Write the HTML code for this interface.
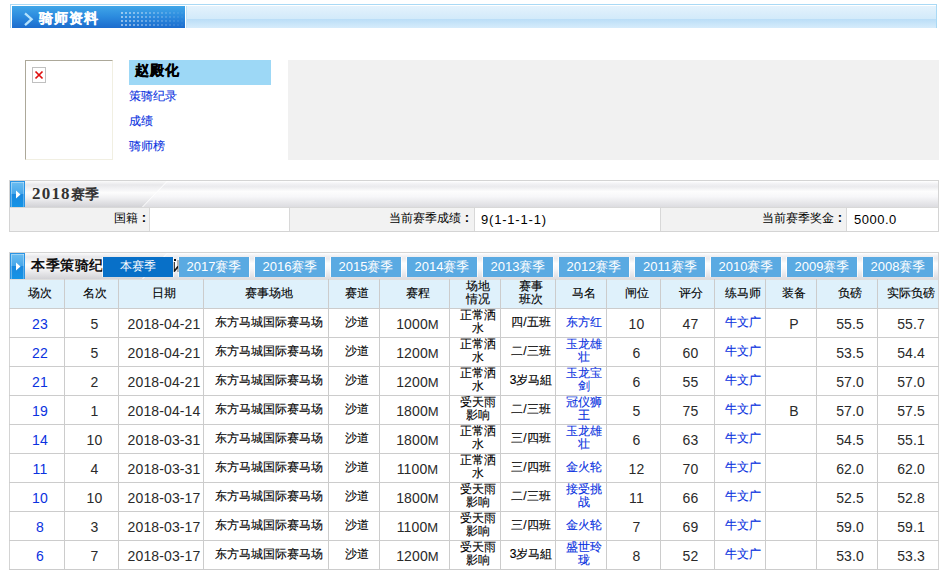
<!DOCTYPE html>
<html><head><meta charset="utf-8">
<style>
*{margin:0;padding:0;box-sizing:border-box}
html,body{width:948px;height:576px;overflow:hidden;background:#fff;font-family:"Liberation Sans",sans-serif;font-size:12px;color:#000}
.a{position:absolute}
.vl{position:absolute;width:1px;background:#cccccc}
.hl{position:absolute;height:1px;background:#cccccc}
.c{position:absolute;display:flex;align-items:center;justify-content:center;text-align:center;white-space:nowrap;line-height:13px;padding-left:6px}
.num{font-size:14px;letter-spacing:0.12px;padding-top:2px;color:#2a2a2a}
.cjk{font-size:12px;padding-bottom:2px;-webkit-text-stroke:0.12px currentColor}
.blue{color:#0a32e0}
.tab{position:absolute;top:257px;height:20px;width:70px;background:#5aaae2;color:#fff;font-size:13px;display:flex;align-items:center;justify-content:center;white-space:nowrap;padding-bottom:1px;box-shadow:-1px 0 0 rgba(255,255,255,0.7),1px 0 0 rgba(255,255,255,0.7)}
</style></head><body>

<div class="a" style="left:10px;top:4px;width:927px;height:24px;background:#a9d9f5"></div>
<div class="a" style="left:11px;top:5px;width:925px;height:23px;background:#ffffff"></div>
<div class="a" style="left:12px;top:6px;width:173px;height:22px;background:linear-gradient(#40a6e8,#2b8ade 50%,#1c6ccd)"></div>
<div class="a" style="left:186px;top:6px;width:1px;height:22px;background:#bfe3f8"></div>
<div class="a" style="left:187px;top:6px;width:749px;height:22px;background:linear-gradient(#e4f2fc,#d2eafa 58%,#b9ddf7 58%,#d6ecfb)"></div>
<svg class="a" style="left:22px;top:11px" width="14" height="16" viewBox="0 0 14 16"><path d="M3 2.3 L9.6 8.2 L3 14.2" fill="none" stroke="#b4e2fc" stroke-width="2.3"/></svg>
<div class="a" style="left:39px;top:10px;font-size:14px;font-weight:bold;color:#fff;line-height:17px;letter-spacing:1px;-webkit-text-stroke:0.15px #fff">骑师资料</div>
<svg class="a" style="left:121px;top:12px" width="64" height="16"><rect x="0" y="0" width="2" height="2" fill="#fff" fill-opacity="0.50"/><rect x="4" y="0" width="2" height="2" fill="#fff" fill-opacity="0.47"/><rect x="8" y="0" width="2" height="2" fill="#fff" fill-opacity="0.44"/><rect x="12" y="0" width="2" height="2" fill="#fff" fill-opacity="0.41"/><rect x="16" y="0" width="2" height="2" fill="#fff" fill-opacity="0.38"/><rect x="20" y="0" width="2" height="2" fill="#fff" fill-opacity="0.35"/><rect x="24" y="0" width="2" height="2" fill="#fff" fill-opacity="0.32"/><rect x="28" y="0" width="2" height="2" fill="#fff" fill-opacity="0.29"/><rect x="32" y="0" width="2" height="2" fill="#fff" fill-opacity="0.26"/><rect x="36" y="0" width="2" height="2" fill="#fff" fill-opacity="0.23"/><rect x="40" y="0" width="2" height="2" fill="#fff" fill-opacity="0.20"/><rect x="44" y="0" width="2" height="2" fill="#fff" fill-opacity="0.17"/><rect x="48" y="0" width="2" height="2" fill="#fff" fill-opacity="0.14"/><rect x="52" y="0" width="2" height="2" fill="#fff" fill-opacity="0.11"/><rect x="56" y="0" width="2" height="2" fill="#fff" fill-opacity="0.08"/><rect x="60" y="0" width="2" height="2" fill="#fff" fill-opacity="0.05"/><rect x="0" y="4" width="2" height="2" fill="#fff" fill-opacity="0.50"/><rect x="4" y="4" width="2" height="2" fill="#fff" fill-opacity="0.47"/><rect x="8" y="4" width="2" height="2" fill="#fff" fill-opacity="0.44"/><rect x="12" y="4" width="2" height="2" fill="#fff" fill-opacity="0.41"/><rect x="16" y="4" width="2" height="2" fill="#fff" fill-opacity="0.38"/><rect x="20" y="4" width="2" height="2" fill="#fff" fill-opacity="0.35"/><rect x="24" y="4" width="2" height="2" fill="#fff" fill-opacity="0.32"/><rect x="28" y="4" width="2" height="2" fill="#fff" fill-opacity="0.29"/><rect x="32" y="4" width="2" height="2" fill="#fff" fill-opacity="0.26"/><rect x="36" y="4" width="2" height="2" fill="#fff" fill-opacity="0.23"/><rect x="40" y="4" width="2" height="2" fill="#fff" fill-opacity="0.20"/><rect x="44" y="4" width="2" height="2" fill="#fff" fill-opacity="0.17"/><rect x="48" y="4" width="2" height="2" fill="#fff" fill-opacity="0.14"/><rect x="52" y="4" width="2" height="2" fill="#fff" fill-opacity="0.11"/><rect x="56" y="4" width="2" height="2" fill="#fff" fill-opacity="0.08"/><rect x="60" y="4" width="2" height="2" fill="#fff" fill-opacity="0.05"/><rect x="0" y="8" width="2" height="2" fill="#fff" fill-opacity="0.50"/><rect x="4" y="8" width="2" height="2" fill="#fff" fill-opacity="0.47"/><rect x="8" y="8" width="2" height="2" fill="#fff" fill-opacity="0.44"/><rect x="12" y="8" width="2" height="2" fill="#fff" fill-opacity="0.41"/><rect x="16" y="8" width="2" height="2" fill="#fff" fill-opacity="0.38"/><rect x="20" y="8" width="2" height="2" fill="#fff" fill-opacity="0.35"/><rect x="24" y="8" width="2" height="2" fill="#fff" fill-opacity="0.32"/><rect x="28" y="8" width="2" height="2" fill="#fff" fill-opacity="0.29"/><rect x="32" y="8" width="2" height="2" fill="#fff" fill-opacity="0.26"/><rect x="36" y="8" width="2" height="2" fill="#fff" fill-opacity="0.23"/><rect x="40" y="8" width="2" height="2" fill="#fff" fill-opacity="0.20"/><rect x="44" y="8" width="2" height="2" fill="#fff" fill-opacity="0.17"/><rect x="48" y="8" width="2" height="2" fill="#fff" fill-opacity="0.14"/><rect x="52" y="8" width="2" height="2" fill="#fff" fill-opacity="0.11"/><rect x="56" y="8" width="2" height="2" fill="#fff" fill-opacity="0.08"/><rect x="60" y="8" width="2" height="2" fill="#fff" fill-opacity="0.05"/><rect x="0" y="12" width="2" height="2" fill="#fff" fill-opacity="0.50"/><rect x="4" y="12" width="2" height="2" fill="#fff" fill-opacity="0.47"/><rect x="8" y="12" width="2" height="2" fill="#fff" fill-opacity="0.44"/><rect x="12" y="12" width="2" height="2" fill="#fff" fill-opacity="0.41"/><rect x="16" y="12" width="2" height="2" fill="#fff" fill-opacity="0.38"/><rect x="20" y="12" width="2" height="2" fill="#fff" fill-opacity="0.35"/><rect x="24" y="12" width="2" height="2" fill="#fff" fill-opacity="0.32"/><rect x="28" y="12" width="2" height="2" fill="#fff" fill-opacity="0.29"/><rect x="32" y="12" width="2" height="2" fill="#fff" fill-opacity="0.26"/><rect x="36" y="12" width="2" height="2" fill="#fff" fill-opacity="0.23"/><rect x="40" y="12" width="2" height="2" fill="#fff" fill-opacity="0.20"/><rect x="44" y="12" width="2" height="2" fill="#fff" fill-opacity="0.17"/><rect x="48" y="12" width="2" height="2" fill="#fff" fill-opacity="0.14"/><rect x="52" y="12" width="2" height="2" fill="#fff" fill-opacity="0.11"/><rect x="56" y="12" width="2" height="2" fill="#fff" fill-opacity="0.08"/><rect x="60" y="12" width="2" height="2" fill="#fff" fill-opacity="0.05"/></svg>
<div class="a" style="left:25px;top:60px;width:88px;height:100px;border:1px solid;border-color:#aca899 #f1efe2 #f1efe2 #aca899;background:#fff"></div>
<div class="a" style="left:32px;top:67px;width:14px;height:16px;border:1px solid #c0c0c0;background:#fff"></div>
<svg class="a" style="left:34px;top:70px" width="10" height="10" viewBox="0 0 10 10"><path d="M1.5 1.5 L8.5 8.5 M8.5 1.5 L1.5 8.5" stroke="#e01010" stroke-width="1.7"/></svg>
<div class="a" style="left:129px;top:60px;width:142px;height:25px;background:#9dd8f6"></div>
<div class="a" style="left:135px;top:62px;font-size:14px;font-weight:bold;line-height:17px;letter-spacing:1px;-webkit-text-stroke:0.4px #000">赵殿化</div>
<div class="a" style="left:129px;top:89px;font-size:12px;line-height:15px;color:#0a32e0;-webkit-text-stroke:0.1px #0a32e0">策骑纪录</div>
<div class="a" style="left:129px;top:114px;font-size:12px;line-height:15px;color:#0a32e0;-webkit-text-stroke:0.1px #0a32e0">成绩</div>
<div class="a" style="left:129px;top:139px;font-size:12px;line-height:15px;color:#0a32e0;-webkit-text-stroke:0.1px #0a32e0">骑师榜</div>
<div class="a" style="left:288px;top:60px;width:651px;height:100px;background:#f1f1f1"></div>
<div class="a" style="left:9px;top:180px;width:930px;height:52px;border:1px solid #d4d4d4;background:#fff"></div>
<svg class="a" style="left:10px;top:181px" width="928" height="26" viewBox="0 0 928 26"><defs><linearGradient id="gR" x1="0" y1="0" x2="0" y2="1"><stop offset="0" stop-color="#ffffff"/><stop offset="0.12" stop-color="#f0f0f3"/><stop offset="0.22" stop-color="#ebebee"/><stop offset="0.4" stop-color="#fdfdfd"/><stop offset="0.6" stop-color="#f7f7f9"/><stop offset="1" stop-color="#dcdce0"/></linearGradient><linearGradient id="gL" x1="0" y1="0" x2="0" y2="1"><stop offset="0" stop-color="#fbfbfb"/><stop offset="0.15" stop-color="#e8e8eb"/><stop offset="0.3" stop-color="#f2f2f4"/><stop offset="0.45" stop-color="#fdfdfd"/><stop offset="0.65" stop-color="#f0f0f2"/><stop offset="1" stop-color="#d2d2d6"/></linearGradient></defs><rect width="928" height="26" fill="url(#gR)"/><polygon points="0,0 157,0 132,26 0,26" fill="url(#gL)"/><line x1="157.5" y1="0" x2="132.5" y2="26" stroke="#ffffff" stroke-width="1" stroke-opacity="0.9"/></svg>
<div class="a" style="left:10px;top:181px;width:15px;height:26px;background:#2a94e4;"></div><div class="a" style="left:11px;top:182px;width:13px;height:25px;background:linear-gradient(#6cbdf0,#45a6ea 50%,#1a88de 50%,#1494e6);box-shadow:inset 1px 1px 0 rgba(255,255,255,0.35),inset -1px 0 0 rgba(255,255,255,0.3)"></div>
<svg class="a" style="left:16px;top:190px" width="6" height="9"><path d="M0 0.5 L4.5 4.5 L0 8.5Z" fill="#fff"/></svg>
<div class="a" style="left:32px;top:185px;font-size:14px;font-weight:bold;color:#333;line-height:18px"><span style="letter-spacing:1.2px;font-family:&quot;Liberation Serif&quot;,serif;font-size:17px">2018</span>赛季</div>
<div class="a" style="left:10px;top:207px;width:928px;height:1px;background:#d8d8d8"></div>
<div class="a" style="left:10px;top:208px;width:139px;height:23px;background:#f2f2f2"></div>
<div class="a" style="left:290px;top:208px;width:184px;height:23px;background:#f2f2f2"></div>
<div class="a" style="left:661px;top:208px;width:185px;height:23px;background:#f2f2f2"></div>
<div class="vl" style="left:149px;top:208px;height:23px;background:#d8d8d8"></div>
<div class="vl" style="left:289px;top:208px;height:23px;background:#d8d8d8"></div>
<div class="vl" style="left:474px;top:208px;height:23px;background:#d8d8d8"></div>
<div class="vl" style="left:660px;top:208px;height:23px;background:#d8d8d8"></div>
<div class="vl" style="left:846px;top:208px;height:23px;background:#d8d8d8"></div>
<div class="a" style="left:10px;top:208px;width:136px;height:23px;text-align:right;line-height:19px;padding-top:0px;font-size:12px">国籍<b style="margin-left:4px;font-size:13px">:</b></div>
<div class="a" style="left:290px;top:208px;width:179px;height:23px;text-align:right;line-height:19px;padding-top:0px;font-size:12px">当前赛季成绩<b style="margin-left:4px;font-size:13px">:</b></div>
<div class="a" style="left:481px;top:208px;height:23px;line-height:23px;font-size:13px;letter-spacing:0.8px">9(1-1-1-1)</div>
<div class="a" style="left:661px;top:208px;width:181px;height:23px;text-align:right;line-height:19px;padding-top:0px;font-size:12px">当前赛季奖金<b style="margin-left:4px;font-size:13px">:</b></div>
<div class="a" style="left:854px;top:208px;height:23px;line-height:23px;font-size:13px;letter-spacing:0.5px">5000.0</div>
<div class="a" style="left:9px;top:252px;width:930px;height:318px;border:1px solid #d4d4d4;background:#fff"></div>
<svg class="a" style="left:10px;top:253px" width="928" height="26" viewBox="0 0 928 26"><defs><linearGradient id="gR" x1="0" y1="0" x2="0" y2="1"><stop offset="0" stop-color="#ffffff"/><stop offset="0.12" stop-color="#f0f0f3"/><stop offset="0.22" stop-color="#ebebee"/><stop offset="0.4" stop-color="#fdfdfd"/><stop offset="0.6" stop-color="#f7f7f9"/><stop offset="1" stop-color="#dcdce0"/></linearGradient><linearGradient id="gL" x1="0" y1="0" x2="0" y2="1"><stop offset="0" stop-color="#fbfbfb"/><stop offset="0.15" stop-color="#e8e8eb"/><stop offset="0.3" stop-color="#f2f2f4"/><stop offset="0.45" stop-color="#fdfdfd"/><stop offset="0.65" stop-color="#f0f0f2"/><stop offset="1" stop-color="#d2d2d6"/></linearGradient></defs><rect width="928" height="26" fill="url(#gR)"/><polygon points="0,0 157,0 132,26 0,26" fill="url(#gL)"/><line x1="157.5" y1="0" x2="132.5" y2="26" stroke="#ffffff" stroke-width="1" stroke-opacity="0.9"/></svg>
<div class="a" style="left:10px;top:253px;width:15px;height:26px;background:#2a94e4;"></div><div class="a" style="left:11px;top:254px;width:13px;height:25px;background:linear-gradient(#6cbdf0,#45a6ea 50%,#1a88de 50%,#1494e6);box-shadow:inset 1px 1px 0 rgba(255,255,255,0.35),inset -1px 0 0 rgba(255,255,255,0.3)"></div>
<svg class="a" style="left:16px;top:262px" width="6" height="9"><path d="M0 0.5 L4.5 4.5 L0 8.5Z" fill="#fff"/></svg>
<div class="a" style="left:31px;top:257px;font-size:14px;font-weight:bold;color:#111;line-height:17px;letter-spacing:0.6px">本季策骑纪录</div>
<svg class="a" style="left:172px;top:258px" width="8" height="16"><path d="M2 4 L2 14 M2.5 13 L6 8.5 M6.5 2 L6.5 14" stroke="#111" stroke-width="1.6" fill="none"/><rect x="2" y="1" width="2" height="2" fill="#111"/></svg>
<div class="tab" style="left:103px;background:#0870c8;font-size:12px">本赛季</div>
<div class="tab" style="left:179px;background:#5aaae2;font-size:13px">2017赛季</div>
<div class="tab" style="left:255px;background:#5aaae2;font-size:13px">2016赛季</div>
<div class="tab" style="left:331px;background:#5aaae2;font-size:13px">2015赛季</div>
<div class="tab" style="left:407px;background:#5aaae2;font-size:13px">2014赛季</div>
<div class="tab" style="left:483px;background:#5aaae2;font-size:13px">2013赛季</div>
<div class="tab" style="left:559px;background:#5aaae2;font-size:13px">2012赛季</div>
<div class="tab" style="left:635px;background:#5aaae2;font-size:13px">2011赛季</div>
<div class="tab" style="left:711px;background:#5aaae2;font-size:13px">2010赛季</div>
<div class="tab" style="left:787px;background:#5aaae2;font-size:13px">2009赛季</div>
<div class="tab" style="left:863px;background:#5aaae2;font-size:13px">2008赛季</div>
<div class="a" style="left:10px;top:279px;width:928px;height:1px;background:#dedede"></div>
<div class="a" style="left:10px;top:280px;width:928px;height:28px;background:#dff1fb"></div>
<div class="hl" style="left:9px;top:308px;width:930px"></div>
<div class="hl" style="left:9px;top:337px;width:930px"></div>
<div class="hl" style="left:9px;top:366px;width:930px"></div>
<div class="hl" style="left:9px;top:395px;width:930px"></div>
<div class="hl" style="left:9px;top:424px;width:930px"></div>
<div class="hl" style="left:9px;top:453px;width:930px"></div>
<div class="hl" style="left:9px;top:482px;width:930px"></div>
<div class="hl" style="left:9px;top:511px;width:930px"></div>
<div class="hl" style="left:9px;top:540px;width:930px"></div>
<div class="hl" style="left:9px;top:569px;width:930px"></div>
<div class="vl" style="left:64px;top:279px;height:290px"></div>
<div class="vl" style="left:118px;top:279px;height:290px"></div>
<div class="vl" style="left:203px;top:279px;height:290px"></div>
<div class="vl" style="left:328px;top:279px;height:290px"></div>
<div class="vl" style="left:379px;top:279px;height:290px"></div>
<div class="vl" style="left:449px;top:279px;height:290px"></div>
<div class="vl" style="left:500px;top:279px;height:290px"></div>
<div class="vl" style="left:555px;top:279px;height:290px"></div>
<div class="vl" style="left:606px;top:279px;height:290px"></div>
<div class="vl" style="left:660px;top:279px;height:290px"></div>
<div class="vl" style="left:714px;top:279px;height:290px"></div>
<div class="vl" style="left:765px;top:279px;height:290px"></div>
<div class="vl" style="left:816px;top:279px;height:290px"></div>
<div class="vl" style="left:877px;top:279px;height:290px"></div>
<div class="c cjk" style="left:10px;top:280px;width:54px;height:28px">场次</div>
<div class="c cjk" style="left:65px;top:280px;width:53px;height:28px">名次</div>
<div class="c cjk" style="left:119px;top:280px;width:84px;height:28px">日期</div>
<div class="c cjk" style="left:204px;top:280px;width:124px;height:28px">赛事场地</div>
<div class="c cjk" style="left:329px;top:280px;width:50px;height:28px">赛道</div>
<div class="c cjk" style="left:380px;top:280px;width:69px;height:28px">赛程</div>
<div class="c cjk" style="left:450px;top:280px;width:50px;height:28px">场地<br>情况</div>
<div class="c cjk" style="left:501px;top:280px;width:54px;height:28px">赛事<br>班次</div>
<div class="c cjk" style="left:556px;top:280px;width:50px;height:28px">马名</div>
<div class="c cjk" style="left:607px;top:280px;width:53px;height:28px">闸位</div>
<div class="c cjk" style="left:661px;top:280px;width:53px;height:28px">评分</div>
<div class="c cjk" style="left:715px;top:280px;width:50px;height:28px">练马师</div>
<div class="c cjk" style="left:766px;top:280px;width:50px;height:28px">装备</div>
<div class="c cjk" style="left:817px;top:280px;width:60px;height:28px">负磅</div>
<div class="c cjk" style="left:878px;top:280px;width:60px;height:28px">实际负磅</div>
<div class="c num blue" style="left:10px;top:309px;width:54px;height:28px">23</div>
<div class="c num" style="left:65px;top:309px;width:53px;height:28px">5</div>
<div class="c num" style="left:119px;top:309px;width:84px;height:28px">2018-04-21</div>
<div class="c cjk" style="left:204px;top:309px;width:124px;height:28px">东方马城国际赛马场</div>
<div class="c cjk" style="left:329px;top:309px;width:50px;height:28px">沙道</div>
<div class="c num" style="left:380px;top:309px;width:69px;height:28px">1000<span style="font-size:13px">M</span></div>
<div class="c cjk" style="left:450px;top:309px;width:50px;height:28px">正常洒<br>水</div>
<div class="c cjk" style="left:501px;top:309px;width:54px;height:28px">四/五班</div>
<div class="c cjk blue" style="left:556px;top:309px;width:50px;height:28px">东方红</div>
<div class="c num" style="left:607px;top:309px;width:53px;height:28px">10</div>
<div class="c num" style="left:661px;top:309px;width:53px;height:28px">47</div>
<div class="c cjk blue" style="left:715px;top:309px;width:50px;height:28px">牛文广</div>
<div class="c num" style="left:766px;top:309px;width:50px;height:28px">P</div>
<div class="c num" style="left:817px;top:309px;width:60px;height:28px">55.5</div>
<div class="c num" style="left:878px;top:309px;width:60px;height:28px">55.7</div>
<div class="c num blue" style="left:10px;top:338px;width:54px;height:28px">22</div>
<div class="c num" style="left:65px;top:338px;width:53px;height:28px">5</div>
<div class="c num" style="left:119px;top:338px;width:84px;height:28px">2018-04-21</div>
<div class="c cjk" style="left:204px;top:338px;width:124px;height:28px">东方马城国际赛马场</div>
<div class="c cjk" style="left:329px;top:338px;width:50px;height:28px">沙道</div>
<div class="c num" style="left:380px;top:338px;width:69px;height:28px">1200<span style="font-size:13px">M</span></div>
<div class="c cjk" style="left:450px;top:338px;width:50px;height:28px">正常洒<br>水</div>
<div class="c cjk" style="left:501px;top:338px;width:54px;height:28px">二/三班</div>
<div class="c cjk blue" style="left:556px;top:338px;width:50px;height:28px">玉龙雄<br>壮</div>
<div class="c num" style="left:607px;top:338px;width:53px;height:28px">6</div>
<div class="c num" style="left:661px;top:338px;width:53px;height:28px">60</div>
<div class="c cjk blue" style="left:715px;top:338px;width:50px;height:28px">牛文广</div>
<div class="c cjk" style="left:766px;top:338px;width:50px;height:28px"></div>
<div class="c num" style="left:817px;top:338px;width:60px;height:28px">53.5</div>
<div class="c num" style="left:878px;top:338px;width:60px;height:28px">54.4</div>
<div class="c num blue" style="left:10px;top:367px;width:54px;height:28px">21</div>
<div class="c num" style="left:65px;top:367px;width:53px;height:28px">2</div>
<div class="c num" style="left:119px;top:367px;width:84px;height:28px">2018-04-21</div>
<div class="c cjk" style="left:204px;top:367px;width:124px;height:28px">东方马城国际赛马场</div>
<div class="c cjk" style="left:329px;top:367px;width:50px;height:28px">沙道</div>
<div class="c num" style="left:380px;top:367px;width:69px;height:28px">1200<span style="font-size:13px">M</span></div>
<div class="c cjk" style="left:450px;top:367px;width:50px;height:28px">正常洒<br>水</div>
<div class="c cjk" style="left:501px;top:367px;width:54px;height:28px">3岁马組</div>
<div class="c cjk blue" style="left:556px;top:367px;width:50px;height:28px">玉龙宝<br>剑</div>
<div class="c num" style="left:607px;top:367px;width:53px;height:28px">6</div>
<div class="c num" style="left:661px;top:367px;width:53px;height:28px">55</div>
<div class="c cjk blue" style="left:715px;top:367px;width:50px;height:28px">牛文广</div>
<div class="c cjk" style="left:766px;top:367px;width:50px;height:28px"></div>
<div class="c num" style="left:817px;top:367px;width:60px;height:28px">57.0</div>
<div class="c num" style="left:878px;top:367px;width:60px;height:28px">57.0</div>
<div class="c num blue" style="left:10px;top:396px;width:54px;height:28px">19</div>
<div class="c num" style="left:65px;top:396px;width:53px;height:28px">1</div>
<div class="c num" style="left:119px;top:396px;width:84px;height:28px">2018-04-14</div>
<div class="c cjk" style="left:204px;top:396px;width:124px;height:28px">东方马城国际赛马场</div>
<div class="c cjk" style="left:329px;top:396px;width:50px;height:28px">沙道</div>
<div class="c num" style="left:380px;top:396px;width:69px;height:28px">1800<span style="font-size:13px">M</span></div>
<div class="c cjk" style="left:450px;top:396px;width:50px;height:28px">受天雨<br>影响</div>
<div class="c cjk" style="left:501px;top:396px;width:54px;height:28px">二/三班</div>
<div class="c cjk blue" style="left:556px;top:396px;width:50px;height:28px">冠仪狮<br>王</div>
<div class="c num" style="left:607px;top:396px;width:53px;height:28px">5</div>
<div class="c num" style="left:661px;top:396px;width:53px;height:28px">75</div>
<div class="c cjk blue" style="left:715px;top:396px;width:50px;height:28px">牛文广</div>
<div class="c num" style="left:766px;top:396px;width:50px;height:28px">B</div>
<div class="c num" style="left:817px;top:396px;width:60px;height:28px">57.0</div>
<div class="c num" style="left:878px;top:396px;width:60px;height:28px">57.5</div>
<div class="c num blue" style="left:10px;top:425px;width:54px;height:28px">14</div>
<div class="c num" style="left:65px;top:425px;width:53px;height:28px">10</div>
<div class="c num" style="left:119px;top:425px;width:84px;height:28px">2018-03-31</div>
<div class="c cjk" style="left:204px;top:425px;width:124px;height:28px">东方马城国际赛马场</div>
<div class="c cjk" style="left:329px;top:425px;width:50px;height:28px">沙道</div>
<div class="c num" style="left:380px;top:425px;width:69px;height:28px">1800<span style="font-size:13px">M</span></div>
<div class="c cjk" style="left:450px;top:425px;width:50px;height:28px">正常洒<br>水</div>
<div class="c cjk" style="left:501px;top:425px;width:54px;height:28px">三/四班</div>
<div class="c cjk blue" style="left:556px;top:425px;width:50px;height:28px">玉龙雄<br>壮</div>
<div class="c num" style="left:607px;top:425px;width:53px;height:28px">6</div>
<div class="c num" style="left:661px;top:425px;width:53px;height:28px">63</div>
<div class="c cjk blue" style="left:715px;top:425px;width:50px;height:28px">牛文广</div>
<div class="c cjk" style="left:766px;top:425px;width:50px;height:28px"></div>
<div class="c num" style="left:817px;top:425px;width:60px;height:28px">54.5</div>
<div class="c num" style="left:878px;top:425px;width:60px;height:28px">55.1</div>
<div class="c num blue" style="left:10px;top:454px;width:54px;height:28px">11</div>
<div class="c num" style="left:65px;top:454px;width:53px;height:28px">4</div>
<div class="c num" style="left:119px;top:454px;width:84px;height:28px">2018-03-31</div>
<div class="c cjk" style="left:204px;top:454px;width:124px;height:28px">东方马城国际赛马场</div>
<div class="c cjk" style="left:329px;top:454px;width:50px;height:28px">沙道</div>
<div class="c num" style="left:380px;top:454px;width:69px;height:28px">1100<span style="font-size:13px">M</span></div>
<div class="c cjk" style="left:450px;top:454px;width:50px;height:28px">正常洒<br>水</div>
<div class="c cjk" style="left:501px;top:454px;width:54px;height:28px">三/四班</div>
<div class="c cjk blue" style="left:556px;top:454px;width:50px;height:28px">金火轮</div>
<div class="c num" style="left:607px;top:454px;width:53px;height:28px">12</div>
<div class="c num" style="left:661px;top:454px;width:53px;height:28px">70</div>
<div class="c cjk blue" style="left:715px;top:454px;width:50px;height:28px">牛文广</div>
<div class="c cjk" style="left:766px;top:454px;width:50px;height:28px"></div>
<div class="c num" style="left:817px;top:454px;width:60px;height:28px">62.0</div>
<div class="c num" style="left:878px;top:454px;width:60px;height:28px">62.0</div>
<div class="c num blue" style="left:10px;top:483px;width:54px;height:28px">10</div>
<div class="c num" style="left:65px;top:483px;width:53px;height:28px">10</div>
<div class="c num" style="left:119px;top:483px;width:84px;height:28px">2018-03-17</div>
<div class="c cjk" style="left:204px;top:483px;width:124px;height:28px">东方马城国际赛马场</div>
<div class="c cjk" style="left:329px;top:483px;width:50px;height:28px">沙道</div>
<div class="c num" style="left:380px;top:483px;width:69px;height:28px">1800<span style="font-size:13px">M</span></div>
<div class="c cjk" style="left:450px;top:483px;width:50px;height:28px">受天雨<br>影响</div>
<div class="c cjk" style="left:501px;top:483px;width:54px;height:28px">二/三班</div>
<div class="c cjk blue" style="left:556px;top:483px;width:50px;height:28px">接受挑<br>战</div>
<div class="c num" style="left:607px;top:483px;width:53px;height:28px">11</div>
<div class="c num" style="left:661px;top:483px;width:53px;height:28px">66</div>
<div class="c cjk blue" style="left:715px;top:483px;width:50px;height:28px">牛文广</div>
<div class="c cjk" style="left:766px;top:483px;width:50px;height:28px"></div>
<div class="c num" style="left:817px;top:483px;width:60px;height:28px">52.5</div>
<div class="c num" style="left:878px;top:483px;width:60px;height:28px">52.8</div>
<div class="c num blue" style="left:10px;top:512px;width:54px;height:28px">8</div>
<div class="c num" style="left:65px;top:512px;width:53px;height:28px">3</div>
<div class="c num" style="left:119px;top:512px;width:84px;height:28px">2018-03-17</div>
<div class="c cjk" style="left:204px;top:512px;width:124px;height:28px">东方马城国际赛马场</div>
<div class="c cjk" style="left:329px;top:512px;width:50px;height:28px">沙道</div>
<div class="c num" style="left:380px;top:512px;width:69px;height:28px">1100<span style="font-size:13px">M</span></div>
<div class="c cjk" style="left:450px;top:512px;width:50px;height:28px">受天雨<br>影响</div>
<div class="c cjk" style="left:501px;top:512px;width:54px;height:28px">三/四班</div>
<div class="c cjk blue" style="left:556px;top:512px;width:50px;height:28px">金火轮</div>
<div class="c num" style="left:607px;top:512px;width:53px;height:28px">7</div>
<div class="c num" style="left:661px;top:512px;width:53px;height:28px">69</div>
<div class="c cjk blue" style="left:715px;top:512px;width:50px;height:28px">牛文广</div>
<div class="c cjk" style="left:766px;top:512px;width:50px;height:28px"></div>
<div class="c num" style="left:817px;top:512px;width:60px;height:28px">59.0</div>
<div class="c num" style="left:878px;top:512px;width:60px;height:28px">59.1</div>
<div class="c num blue" style="left:10px;top:541px;width:54px;height:28px">6</div>
<div class="c num" style="left:65px;top:541px;width:53px;height:28px">7</div>
<div class="c num" style="left:119px;top:541px;width:84px;height:28px">2018-03-17</div>
<div class="c cjk" style="left:204px;top:541px;width:124px;height:28px">东方马城国际赛马场</div>
<div class="c cjk" style="left:329px;top:541px;width:50px;height:28px">沙道</div>
<div class="c num" style="left:380px;top:541px;width:69px;height:28px">1200<span style="font-size:13px">M</span></div>
<div class="c cjk" style="left:450px;top:541px;width:50px;height:28px">受天雨<br>影响</div>
<div class="c cjk" style="left:501px;top:541px;width:54px;height:28px">3岁马組</div>
<div class="c cjk blue" style="left:556px;top:541px;width:50px;height:28px">盛世玲<br>珑</div>
<div class="c num" style="left:607px;top:541px;width:53px;height:28px">8</div>
<div class="c num" style="left:661px;top:541px;width:53px;height:28px">52</div>
<div class="c cjk blue" style="left:715px;top:541px;width:50px;height:28px">牛文广</div>
<div class="c cjk" style="left:766px;top:541px;width:50px;height:28px"></div>
<div class="c num" style="left:817px;top:541px;width:60px;height:28px">53.0</div>
<div class="c num" style="left:878px;top:541px;width:60px;height:28px">53.3</div>
</body></html>
